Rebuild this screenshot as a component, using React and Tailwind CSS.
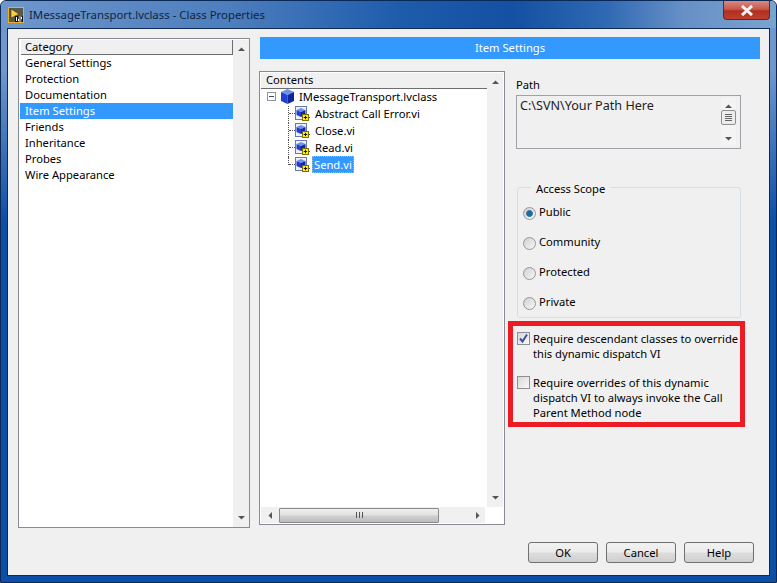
const categories = ['General Settings', 'Protection', 'Documentation', 'Item Settings', 'Friends', 'Inheritance', 'Probes', 'Wire Appearance'];
const files = ['Abstract Call Error.vi', 'Close.vi', 'Read.vi', 'Send.vi'];
const scopes = ['Public', 'Community', 'Protected', 'Private'];

function Arrow({ dir }) {
  const points = {
    up: '0,4 3.5,0.5 7,4',
    down: '0,0 3.5,3.5 7,0',
    left: '4,0 0.5,3.5 4,7',
    right: '0,0 3.5,3.5 0,7',
  };
  const horizontal = dir === 'left' || dir === 'right';
  return (
    <svg width={horizontal ? 4 : 7} height={horizontal ? 7 : 4} viewBox={horizontal ? '0 0 4 7' : '0 0 7 4'}>
      <polygon points={points[dir]} fill="#555" />
    </svg>
  );
}

function VScroll() {
  return (
    <div className="flex w-[16px] shrink-0 flex-col items-center justify-between bg-[#f0f0f0] py-[7px]">
      <Arrow dir="up" />
      <Arrow dir="down" />
    </div>
  );
}

function ClassIcon() {
  return (
    <svg width="13" height="15" viewBox="0 0 13 15" className="shrink-0">
      <polygon points="6.5,0 13,3 6.5,6 0,3" fill="#6f8ff0" />
      <polygon points="0,3 6.5,6 6.5,15 0,12" fill="#1f3fd0" />
      <polygon points="13,3 6.5,6 6.5,15 13,12" fill="#10269a" />
    </svg>
  );
}

function ViIcon() {
  return (
    <svg width="15" height="16" viewBox="0 0 15 16" className="shrink-0">
      <rect x="0.5" y="0.5" width="11" height="13" fill="#eef2fb" stroke="#6a78b0" />
      <polygon points="6,2 10.5,4 6,6 1.5,4" fill="#6f8ff0" />
      <polygon points="1.5,4 6,6 6,11 1.5,9" fill="#1f3fd0" />
      <polygon points="10.5,4 6,6 6,11 10.5,9" fill="#10269a" />
      <rect x="7.5" y="8.5" width="6" height="6" fill="#ffe820" stroke="#7a7000" />
      <path d="M10.5 9.8v3.4M8.8 11.5h3.4" stroke="#111" />
      <rect x="14" y="11" width="1" height="1" fill="#e01010" />
    </svg>
  );
}

function Radio({ checked }) {
  return (
    <span className="flex h-[13px] w-[13px] shrink-0 items-center justify-center rounded-full border border-[#979797] bg-[linear-gradient(135deg,#d0d0d0,#f8f8f8)]">
      {checked && <span className="h-[7px] w-[7px] rounded-full border border-[#3d6a94] bg-[#0f6da8]" />}
    </span>
  );
}

function Checkbox({ checked }) {
  return (
    <span className="mt-[1px] flex h-[13px] w-[13px] shrink-0 items-center justify-center border border-[#8e8f8f] bg-[linear-gradient(135deg,#d8d8d8,#f8f8f8)]">
      {checked && (
        <svg width="11" height="11" viewBox="0 0 11 11">
          <path d="M2 5.5l2.5 3L9 1.5" fill="none" stroke="#3f4f9f" strokeWidth="2" />
        </svg>
      )}
    </span>
  );
}

function DialogButton({ children }) {
  return (
    <button
      type="button"
      className="h-[21px] w-[70px] rounded-[3px] border border-[#707070] bg-[linear-gradient(#f2f2f2_0%,#ebebeb_48%,#dddddd_52%,#cfcfcf_100%)] text-[#000]"
    >
      {children}
    </button>
  );
}

export default function App() {
  return (
    <div className="flex h-[583px] w-[777px] flex-col overflow-hidden rounded-t-[6px] border border-[#0a2a55] bg-[linear-gradient(#6f97cb_0%,#6f97cb_12%,#0d4ea6_38%,#0d4ea6_100%)] font-['Noto_Sans',sans-serif] text-[11.2px] leading-[16px] text-black">
      <div className="flex h-[27px] shrink-0 items-start bg-[linear-gradient(90deg,#6f97cb_0%,#4c7dbd_30%,#1d5bab_52%,#1450a3_66%,#2f69b3_78%,#6690c6_88%,#7ba3d0_100%)]">
        <svg width="16" height="16" viewBox="0 0 16 16" className="ml-[7px] mt-[6px] shrink-0">
          <rect x="0.5" y="0.5" width="15" height="15" fill="#5a5a4a" stroke="#e8b020" />
          <polygon points="3,2 11,7 3,11" fill="#f5d040" stroke="#3a3000" strokeWidth="0.5" />
          <rect x="7" y="9" width="8" height="6" fill="#111" />
          <path d="M8.5 10v4M10.5 10h3v2h-3v2h3" fill="none" stroke="#fff" />
        </svg>
        <span className="ml-[5px] mt-[6px] text-[11.4px] text-[#10243f]">IMessageTransport.lvclass - Class Properties</span>
        <span className="ml-auto mr-[6px] flex h-[19px] w-[47px] items-center justify-center rounded-b-[4px] border border-t-0 border-[#5a2a2a] bg-[linear-gradient(#d88a80_0%,#c8584c_45%,#b03020_55%,#c04030_100%)]">
          <svg width="14" height="11" viewBox="0 0 14 11">
            <path d="M2 1l10 9M12 1L2 10" stroke="#f4f4f4" strokeWidth="3" />
          </svg>
        </span>
      </div>

      <div className="mx-[6px] mb-[6px] flex flex-1 flex-col border border-[#0a2a55] bg-[#f0f0f0]">
        <div className="flex gap-[10px] pl-[10px] pt-[9px]">
          <div className="flex h-[490px] w-[232px] shrink-0 border border-[#8a8a94] bg-white pl-[1px] pt-[1px]">
            <div className="flex-1">
              <div className="ml-[1px] h-[15px] border-b border-r border-[#6d6d6d] bg-[#f0f0f0] pl-[4px] leading-[13px]">Category</div>
              {categories.map((name) => (
                <div key={name} className={name === 'Item Settings' ? 'h-[16px] bg-[#3399ff] pl-[5px] text-white' : 'h-[16px] pl-[5px]'}>
                  {name}
                </div>
              ))}
            </div>
            <VScroll />
          </div>

          <div className="-mt-[1px] w-[500px]">
            <div className="flex h-[22px] items-center justify-center bg-[#3399ff] text-white">Item Settings</div>
            <div className="-ml-[1px] mt-[12px] flex gap-[11px]">
              <div className="flex h-[454px] w-[246px] shrink-0 flex-col border border-[#8a8a94] bg-white p-[1px]">
                <div className="flex min-h-0 flex-1">
                  <div className="flex-1">
                    <div className="h-[16px] border-b border-[#6d6d6d] bg-[#f0f0f0] pl-[5px] leading-[13px]">Contents</div>
                    <div className="relative flex h-[17px] items-center pb-[2px] pl-[6px]">
                      <span className="flex h-[9px] w-[9px] items-center justify-center border border-[#8a96a6] bg-white">
                        <span className="h-[1px] w-[5px] bg-[#404a60]" />
                      </span>
                      <span className="ml-[5px]"><ClassIcon /></span>
                      <span className="ml-[5px]">IMessageTransport.lvclass</span>
                    </div>
                    {files.map((name, i) => (
                      <div key={name} className="relative flex h-[17px] items-center pb-[2px] pl-[34px]">
                        <span className={`absolute left-[27px] top-0 w-0 border-l border-dotted border-[#555] ${i === files.length - 1 ? 'h-[8px]' : 'h-[17px]'}`} />
                        <span className="absolute left-[28px] top-[7px] w-[6px] border-t border-dotted border-[#555]" />
                        <ViIcon />
                        {name === 'Send.vi' ? (
                          <span className="ml-[2px] border border-dotted border-[#90c0f0] bg-[#3399ff] px-[1px] leading-[15px] text-white">{name}</span>
                        ) : (
                          <span className="ml-[5px]">{name}</span>
                        )}
                      </div>
                    ))}
                  </div>
                  <VScroll />
                </div>
                <div className="flex h-[16px] w-[224px] items-center bg-[#f0f0f0]">
                  <span className="flex w-[18px] justify-center"><Arrow dir="left" /></span>
                  <span className="flex h-[15px] w-[160px] items-center justify-center gap-[1px] rounded-[1px] border border-[#8a8a8a] bg-[linear-gradient(#efefef_0%,#e2e2e2_45%,#cfcfcf_55%,#bdbdbd_100%)]">
                    <span className="h-[6px] w-[1px] bg-[#555]" />
                    <span className="ml-[1px] h-[6px] w-[1px] bg-[#555]" />
                    <span className="ml-[1px] h-[6px] w-[1px] bg-[#555]" />
                  </span>
                  <span className="ml-[37px] flex"><Arrow dir="right" /></span>
                </div>
              </div>

              <div className="w-[225px] shrink-0">
                <div className="mt-[6px]">Path</div>
                <div className="mt-[2px] flex h-[54px] border border-[#a0a0a8] pl-[3px]">
                  <span className="flex-1 pt-[1px] text-[12.6px] leading-[18px] text-[#222]">C:\SVN\Your Path Here</span>
                  <div className="mr-[4px] mt-[2px] mb-[2px] flex w-[15px] flex-col items-center bg-[#f4f4f4] pt-[6px]">
                    <Arrow dir="up" />
                    <span className="mt-[2px] flex h-[15px] w-[15px] flex-col items-center justify-center gap-[1px] rounded-[2px] border border-[#8f8f8f] bg-[#ececec]">
                      <span className="h-[1px] w-[7px] bg-[#666]" />
                      <span className="h-[1px] w-[7px] bg-[#666]" />
                      <span className="h-[1px] w-[7px] bg-[#666]" />
                      <span className="h-[1px] w-[7px] bg-[#666]" />
                    </span>
                    <span className="mt-auto pb-[5px]"><Arrow dir="down" /></span>
                  </div>
                </div>

                <fieldset className="mt-[31px] ml-[1px] h-[138px] w-[224px] rounded-[3px] border border-[#d5dfe5] pb-[3px] pl-[5px]">
                  <legend className="ml-[8px] translate-y-[2px] px-[5px] leading-[14px]">Access Scope</legend>
                  <div className="mt-[11px] flex flex-col gap-[14px]">
                    {scopes.map((name, i) => (
                      <div key={name} className="flex h-[16px] gap-[3px]">
                        <span className="mt-[2px]"><Radio checked={i === 0} /></span>
                        <span className="-mt-[1px]">{name}</span>
                      </div>
                    ))}
                  </div>
                </fieldset>

                <div className="-ml-[8px] mt-[3px] h-[106px] w-[237px] border-[5px] border-[#ed1c24] pl-[4px] pt-[5px] leading-[15px]">
                  <div className="flex gap-[3px]">
                    <Checkbox checked />
                    <span>Require descendant classes to override this dynamic dispatch VI</span>
                  </div>
                  <div className="mt-[14px] flex gap-[3px]">
                    <Checkbox />
                    <span>Require overrides of this dynamic dispatch VI to always invoke the Call Parent Method node</span>
                  </div>
                </div>
              </div>
            </div>
          </div>
        </div>

        <div className="mt-[14px] flex justify-end gap-[8px] pr-[15px]">
          <DialogButton>OK</DialogButton>
          <DialogButton>Cancel</DialogButton>
          <DialogButton>Help</DialogButton>
        </div>
      </div>
    </div>
  );
}
